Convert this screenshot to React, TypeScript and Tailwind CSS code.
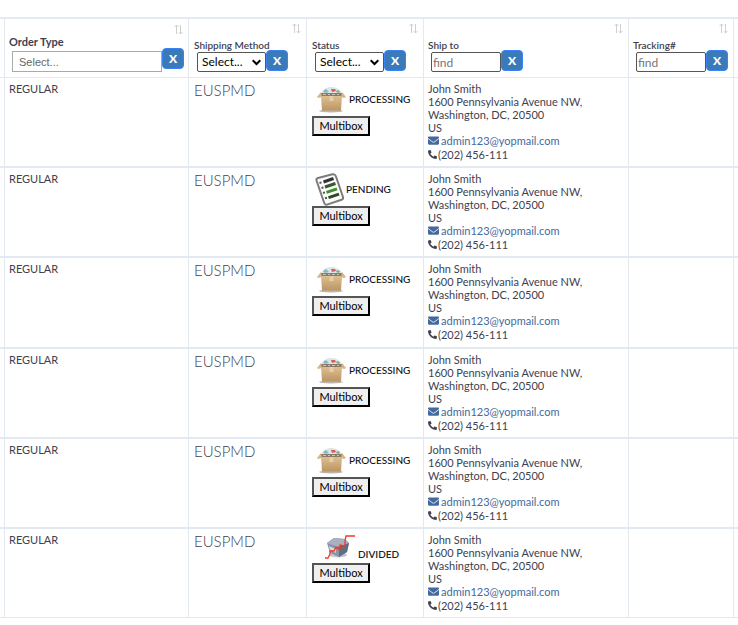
import { FaEnvelope, FaPhone } from 'react-icons/fa';

const orders = ['PROCESSING', 'PENDING', 'PROCESSING', 'PROCESSING', 'PROCESSING', 'DIVIDED'];

const line = 'border-[#e3e9f1]';

function SortIcon() {
  return (
    <svg className="ml-auto mr-[5px] block" width="9" height="11" viewBox="0 0 9 11" fill="none" stroke="#cfcfcf" strokeWidth="1">
      <path d="M2.5 10V1M.5 3l2-2 2 2M6.5 1v9M4.8 8.2l1.7 1.8 2-2" />
    </svg>
  );
}

function BoxIcon() {
  return (
    <svg width="30" height="26" viewBox="0 0 30 26">
      <defs>
        <linearGradient id="carton" x1="0" y1="0" x2="0" y2="1">
          <stop offset="0" stopColor="#dcbf92" />
          <stop offset="1" stopColor="#bc9561" />
        </linearGradient>
      </defs>
      <ellipse cx="14" cy="24" rx="12" ry="1.5" fill="#b9b5b0" />
      <path d="M4 6C6 2 10 0 14 0s9 2 11 6z" fill="#dde5e8" />
      <path d="M6 4l3-2 3 3-4 1z" fill="#86b9c4" />
      <path d="M14 2h4l1 2-4 1z" fill="#d4605a" />
      <path d="M20 3l3 1-1 2-3-1z" fill="#7fae84" />
      <path d="M3 6h23v3H3z" fill="#8b7a68" />
      <path d="M6 7.5h3M11 7.5h2M15 7.5h3M20 7.5h2" stroke="#c9c3ba" strokeWidth="1" />
      <path d="M4 9h21l-1 14.5H5z" fill="url(#carton)" />
      <path d="M4 5 0 10l1 1 4-1zM25 5l4 5-2 1-3-1z" fill="#d8b586" />
      <path d="M12.5 9h4v5h-4z" fill="#e6cfa9" />
    </svg>
  );
}

function PendingIcon() {
  return (
    <svg width="30" height="33" viewBox="0 0 30 33">
      <path d="M1.5 7.5Q1 5.500 3 5L17.500 1.200Q20 .8 20.800 3L28 24Q28.600 26 26.500 26.800L12 31.600Q10 32.200 9.200 30z" fill="#fbfbfb" stroke="#7c7c7c" strokeWidth="2" />
      <path d="M4.500 10l2-.6M6.500 15l2-.6M8 20l2-.6M10 25.300l2-.6" stroke="#555" strokeWidth="2" />
      <path d="M8.500 9l10-3.500" stroke="#333" strokeWidth="3" />
      <path d="M10 14l10.500-3.500" stroke="#35592c" strokeWidth="3" />
      <path d="M11.500 19.300l10.500-3.500" stroke="#3f8f2e" strokeWidth="3" />
      <path d="M13.500 24.700l10.500-3.500" stroke="#294a22" strokeWidth="3" />
    </svg>
  );
}

function DividedIcon() {
  return (
    <svg width="32" height="26" viewBox="0 0 32 26">
      <ellipse cx="14" cy="21" rx="9" ry="2.5" fill="#c3c7cf" />
      <path d="M3 9 10 4l11 1 4 4-2 9-8 5-9-4z" fill="#8a93a8" />
      <path d="M3 9 10 4l11 1 4 4-10 4z" fill="#a9b1c0" />
      <path d="M15 13l10-4-2 9-8 5z" fill="#626c82" />
      <path d="M5 12l7 3v4l-6-3z" fill="#d2d7df" />
      <path d="M1 24h3l2-4v-3h4l2-4 4 2v-4l5 1V7l1-5h9" fill="none" stroke="#ee3d20" strokeWidth="1.3" />
      <path d="M11 14l7-3-3 5z" fill="#e2442c" />
    </svg>
  );
}

function Status({ status }: { status: string }) {
  if (status === 'PENDING') {
    return (
      <div className="flex h-[33px] items-center gap-px pl-[3px] text-[10px] font-medium text-[#111]">
        <PendingIcon />
        <span>PENDING</span>
      </div>
    );
  }
  if (status === 'DIVIDED') {
    return (
      <div className="flex h-[29px] items-start gap-[2px] pl-3 text-[10px] font-semibold text-[#222]">
        <DividedIcon />
        <span className="mt-[14px] leading-3">DIVIDED</span>
      </div>
    );
  }
  return (
    <div className="flex h-[33px] items-center gap-[2px] pl-[5px] text-[10px] font-medium text-[#111]">
      <BoxIcon />
      <span>PROCESSING</span>
    </div>
  );
}

function ClearButton() {
  return (
    <button type="button" aria-label="Clear filter" className="h-[21px] w-[22px] shrink-0 rounded border border-[#3b82f6] bg-[#3b7ab8] text-xs font-black leading-5 text-white">
      X
    </button>
  );
}

function SelectHead({ id, label }: { id: string; label: string }) {
  return (
    <th className={`border-b border-r ${line} p-0 pl-[5px] text-left align-bottom`}>
      <SortIcon />
      <label htmlFor={id} className="mt-[6px] block text-[10px] font-semibold leading-[10px]">{label}</label>
      <div className="mb-[5px] flex pl-[3px]">
        <div className="relative mt-[2px]">
          <select id={id} className="block h-5 w-[69px] appearance-none rounded-xs border border-[#555] bg-white pl-1 text-xs font-normal text-black">
            <option>Select...</option>
          </select>
          <svg className="pointer-events-none absolute right-[5px] top-[7px]" width="9" height="7" viewBox="0 0 9 7" fill="none" stroke="#000" strokeWidth="2">
            <path d="M.7 1.2l3.8 3.8 3.8-3.8" />
          </svg>
        </div>
        <ClearButton />
      </div>
    </th>
  );
}

function FindHead({ id, label }: { id: string; label: string }) {
  return (
    <th className={`border-b border-r ${line} p-0 pl-1 text-left align-bottom`}>
      <SortIcon />
      <label htmlFor={id} className="mt-[6px] block text-[10px] font-semibold leading-[10px]">{label}</label>
      <div className="mb-[5px] flex pl-[3px]">
        <input id={id} placeholder="find" className="mt-[2px] h-5 w-[70px] rounded-xs border border-[#555] px-px text-xs font-normal placeholder:text-[#757575]" />
        <ClearButton />
      </div>
    </th>
  );
}

export default function App() {
  return (
    <div className="bg-white pt-[17px] font-[Lato,sans-serif] text-[11px] leading-[13px] text-[#3e4250]">
      <table className={`w-full table-fixed border-separate border-spacing-0 border-t-2 ${line}`}>
        <colgroup>
          <col className="w-[5px]" />
          <col className="w-[184px]" />
          <col className="w-[118px]" />
          <col className="w-[117px]" />
          <col className="w-[205px]" />
          <col className="w-[105px]" />
          <col />
        </colgroup>
        <thead>
          <tr className="h-[59px]">
            <th className={`border-b border-r ${line} p-0`} />
            <th className={`border-b border-r ${line} p-0 pl-1 text-left align-bottom`}>
              <SortIcon />
              <label htmlFor="order-type" className="mt-px block text-[11px] leading-3">Order Type</label>
              <div className="mb-[5px] flex pl-[3px]">
                <input id="order-type" placeholder="Select..." className="mt-[3px] h-[21px] w-[150px] border border-[#aaa] px-[6px] font-['Liberation_Sans',sans-serif] text-[11px] font-normal placeholder:text-[#666]" />
                <ClearButton />
              </div>
            </th>
            <SelectHead id="shipping-method" label="Shipping Method" />
            <SelectHead id="status" label="Status" />
            <FindHead id="ship-to" label="Ship to" />
            <FindHead id="tracking" label="Tracking#" />
            <th className={`border-b ${line} p-0`} />
          </tr>
        </thead>
        <tbody className="[&_td]:border-b [&_td]:border-t [&_td]:border-[#e3e9f1] [&_td]:align-top [&_td:not(:last-child)]:border-r [&_tr:first-child_td]:border-t-0">
          {orders.map((status, i) => (
            <tr key={i} className="h-[90px] first:h-[89px] nth-3:h-[91px]">
              <td className="p-0" />
              <td className="p-1">REGULAR</td>
              <td className="p-1 pl-[5px] text-[15px] font-light leading-4">EUSPMD</td>
              <td className="p-[5px]">
                <Status status={status} />
                <button type="button" className="block h-5 w-[58px] border-2 border-b-black border-l-[#555] border-r-black border-t-[#555] bg-[#efefef] text-[11px] leading-4 text-black">
                  Multibox
                </button>
              </td>
              <td className="p-1">
                <p>John Smith</p>
                <p>1600 Pennsylvania Avenue NW,</p>
                <p>Washington, DC, 20500</p>
                <p>US</p>
                <a href="mailto:admin123@yopmail.com" className="flex items-center gap-[2px] text-[#44699e]">
                  <FaEnvelope size={11} />
                  admin123@yopmail.com
                </a>
                <p className="mt-px flex items-center gap-px">
                  <FaPhone size={9} className="-scale-x-100" />
                  (202) 456-111
                </p>
              </td>
              <td className="p-1" />
              <td className="p-1" />
            </tr>
          ))}
        </tbody>
      </table>
    </div>
  );
}
